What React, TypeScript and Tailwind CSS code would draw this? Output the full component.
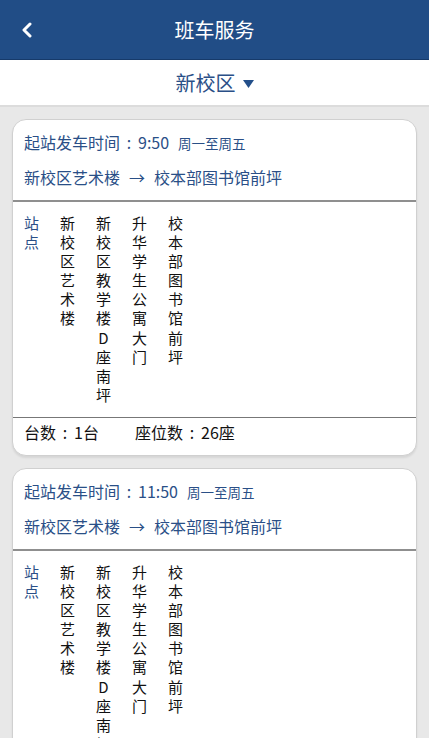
const stations = ['新校区艺术楼', '新校区教学楼D座南坪', '升华学生公寓大门', '校本部图书馆前坪'];

const trips = [
  { time: '9:50', days: '周一至周五', from: '新校区艺术楼', to: '校本部图书馆前坪', buses: '1台', seats: '26座' },
  { time: '11:50', days: '周一至周五', from: '新校区艺术楼', to: '校本部图书馆前坪', buses: '1台', seats: '26座' },
];

// centered full-width colon like the reference font
function Colon() {
  return <span className="inline-block w-[18px] text-center">:</span>;
}

function TripCard({ trip }: { trip: (typeof trips)[number] }) {
  return (
    <div className="mx-[12px] mt-[12px] bg-white rounded-[14px] border border-[#d0d0d0] shadow-[0_2px_2px_rgba(0,0,0,0.08)] overflow-hidden">
      {/* time + route */}
      <div className="px-[11px] pt-[11px] pb-[12px] text-[#2a4f87]">
        <div className="flex items-baseline leading-[22px]">
          <span className="text-[16px]">
            起站发车时间<Colon />{trip.time}
          </span>
          <span className="text-[13.5px] ml-[9px]">{trip.days}</span>
        </div>
        <div className="mt-[12px] leading-[22px] text-[16px] flex">
          <span>{trip.from}</span>
          <span className="mx-[9px]">→</span>
          <span>{trip.to}</span>
        </div>
      </div>
      <div className="h-[2px] bg-[#8f8f8f]" />

      {/* stations */}
      <div className="flex gap-[21px] px-[11px] pt-[11px] pb-[13px] text-[15px] leading-[19.1px]">
        <div className="w-[15px] text-[#2a4f87] flex flex-col">
          <span>站</span>
          <span>点</span>
        </div>
        {stations.map((s) => (
          <div key={s} className="w-[15px] flex flex-col items-center text-[#111]">
            {s.split('').map((c, i) => (
              <span key={i}>{c}</span>
            ))}
          </div>
        ))}
      </div>
      <div className="h-[1px] bg-[#777]" />

      {/* footer */}
      <div className="flex px-[11px] pt-[3px] pb-[12px] text-[16px] leading-[22px] text-[#111]">
        <span className="w-[111px]">
          台数<Colon />{trip.buses}
        </span>
        <span>
          座位数<Colon />{trip.seats}
        </span>
      </div>
    </div>
  );
}

export default function App() {
  return (
    <div
      className="w-[429px] h-[738px] overflow-hidden bg-[#e8e8e8]"
      style={{ fontFamily: '"Noto Sans CJK SC", Roboto, sans-serif' }}
    >
      {/* Header */}
      <div className="relative h-[60px] bg-[#214d86] border-b border-[#163a6a] flex items-center justify-center">
        <svg className="absolute left-[20px] top-[22px]" width="14" height="16" viewBox="0 0 14 16">
          <path d="M10 2 L4 8 L10 14" fill="none" stroke="white" strokeWidth="3" strokeLinecap="round" strokeLinejoin="round" />
        </svg>
        <span className="text-white text-[20px]">班车服务</span>
      </div>

      {/* Campus selector */}
      <div className="h-[47px] bg-white border-b-2 border-[#dcdcdc] flex items-center justify-center text-[#2a4f87]">
        <span className="text-[20px]">新校区</span>
        <svg className="ml-[7px] mt-[2px]" width="11" height="8" viewBox="0 0 11 8">
          <path d="M0 0 H11 L5.5 8 Z" fill="#234f8a" />
        </svg>
      </div>

      {trips.map((t, i) => (
        <TripCard key={i} trip={t} />
      ))}
    </div>
  );
}
